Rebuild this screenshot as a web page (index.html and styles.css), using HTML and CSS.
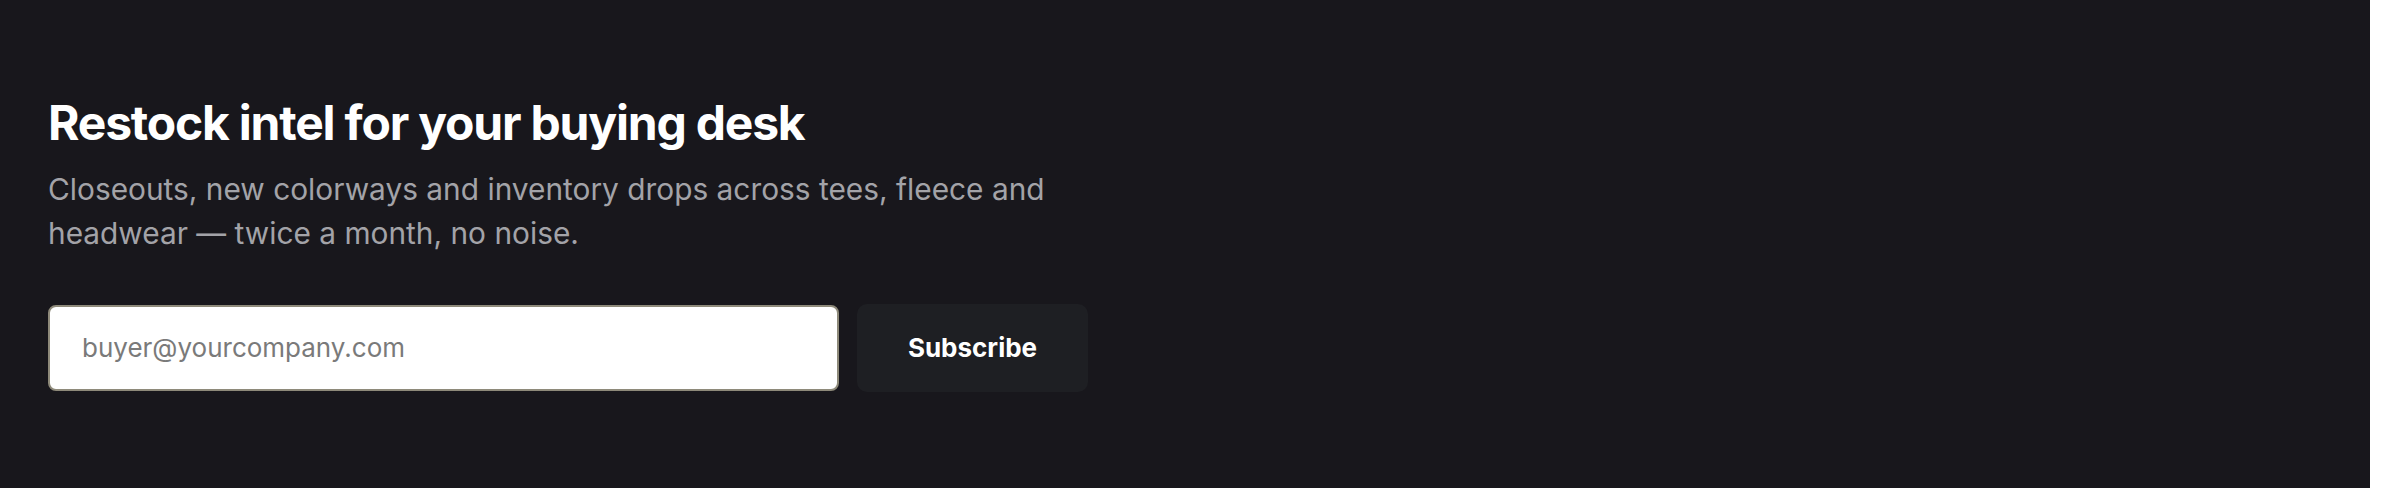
FILE: index.html
```html
<!DOCTYPE html>
<html lang="en">
<head>
<meta charset="utf-8">
<title>Restock intel</title>
<link rel="stylesheet" href="styles.css">
</head>
<body>
<section class="newsletter">
  <h2 class="title">Restock intel for your buying desk</h2>
  <p class="lede">Closeouts, new colorways and inventory drops across tees, fleece and headwear — twice a month, no noise.</p>
  <form class="signup" onsubmit="return false">
    <input class="email" type="email" placeholder="buyer@yourcompany.com">
    <button class="submit" type="submit">Subscribe</button>
  </form>
</section>
</body>
</html>
```

FILE: styles.css
```css
html, body {
  margin: 0;
  padding: 0;
  background: #ffffff;
}
body {
  font-family: Inter, "Noto Sans", sans-serif;
}
.newsletter {
  box-sizing: border-box;
  width: 2370px;
  height: 488px;
  background: #18171c;
  padding: 94px 48px 0;
}
.title {
  margin: 0;
  font-size: 48px;
  line-height: 1.2;
  font-weight: 700;
  color: #ffffff;
  letter-spacing: -0.025em;
}
.lede {
  margin: 15px 0 0;
  max-width: 1040px;
  font-size: 29.85px;
  line-height: 44px;
  color: #a3a3a8;
}
.signup {
  display: flex;
  gap: 18px;
  margin-top: 50px;
}
.email {
  box-sizing: border-box;
  width: 791px;
  height: 86px;
  border: 2px solid #8e8a7a;
  border-radius: 8px;
  background: #ffffff;
  padding: 0 32px;
  font-family: Inter, "Noto Sans", sans-serif;
  font-size: 26px;
  color: #222;
  outline: none;
}
.email::placeholder {
  color: #7a7a7a;
}
.submit {
  box-sizing: border-box;
  width: 231px;
  height: 88px;
  margin-top: -1px;
  border: none;
  border-radius: 10px;
  background: #1e1f23;
  color: #ffffff;
  font-family: Inter, "Noto Sans", sans-serif;
  font-size: 26px;
  font-weight: 700;
  cursor: pointer;
}
```
